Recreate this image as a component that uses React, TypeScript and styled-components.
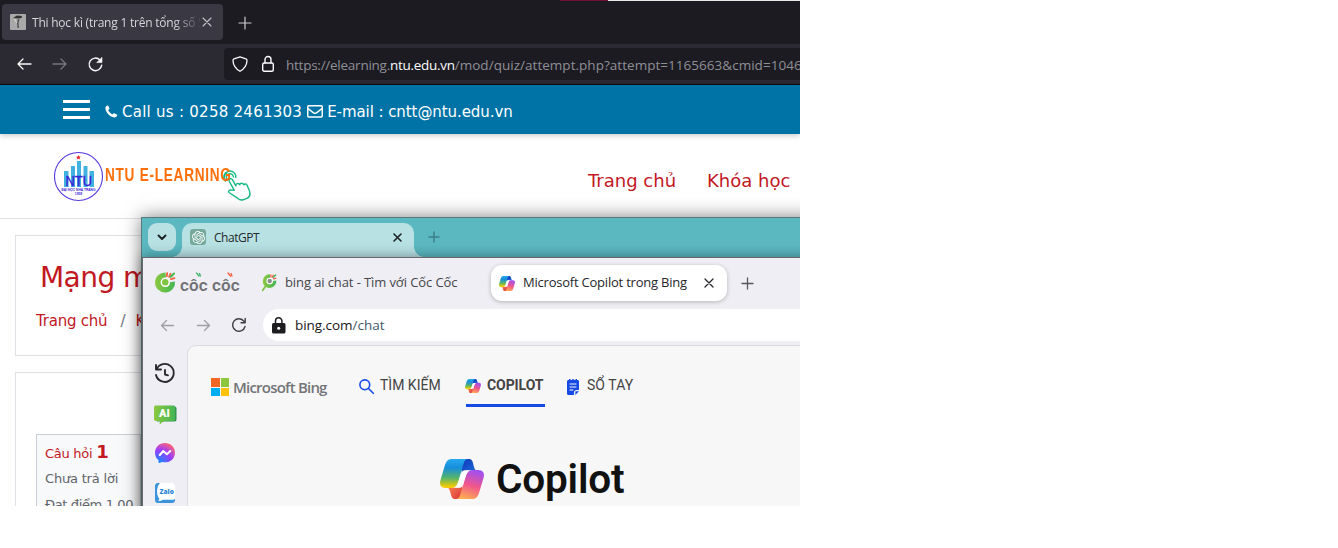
import React from 'react';
import styled, { createGlobalStyle } from 'styled-components';
import { SiOpenai } from 'react-icons/si';

const Global = createGlobalStyle`
  * { box-sizing: border-box; }
  html, body { margin: 0; background: #fff; }
`;

const SEGOE = `'Open Sans', 'Noto Sans', sans-serif`;
const VERDANA = `'DejaVu Sans', sans-serif`;
const ROBOTO = `Roboto, 'Noto Sans', sans-serif`;

const Desktop = styled.main`
  position: relative;
  width: 800px;
  height: 506px;
  overflow: hidden;
  background: #fff;
`;

const Label = styled.span<{ $size: number; $color?: string; $font?: string; $weight?: number; $ls?: number; $lh?: number; $ml?: number; $mt?: number }>`
  margin: ${p => p.$mt ?? 0}px 0 0 ${p => p.$ml ?? 0}px;
  font-family: ${p => p.$font ?? SEGOE};
  font-size: ${p => p.$size}px;
  color: ${p => p.$color ?? '#222'};
  font-weight: ${p => p.$weight ?? 400};
  letter-spacing: ${p => p.$ls ?? 0}px;
  line-height: ${p => p.$lh ?? 20}px;
  white-space: nowrap;
  flex: none;
`;

const Glyph = styled.svg<{ $ml?: number; $mt?: number }>`
  display: block;
  flex: none;
  overflow: visible;
  margin-left: ${p => p.$ml ?? 0}px;
  margin-top: ${p => p.$mt ?? 0}px;
  fill: none;
  stroke-linecap: round;
  stroke-linejoin: round;
`;

/* Outer browser */
const TabStrip = styled.div`
  display: flex;
  height: 44px;
  padding: 4px 0 4px 2px;
  background: #1c1b22;
`;
const TopEdge = styled.div`
  position: absolute;
  top: 0;
  left: 560px;
  width: 240px;
  height: 1px;
  background: linear-gradient(90deg, #6d1035 48px, #e6ebe6 48px);
`;
const DarkTab = styled.div`
  display: flex;
  align-items: center;
  width: 221px;
  height: 36px;
  padding-left: 8px;
  border-radius: 4px;
  background: #3a3843;
`;
const TabTitle = styled.div`
  width: 168px;
  margin-left: 6px;
  padding-top: 2px;
  overflow: hidden;
  mask-image: linear-gradient(90deg, #000 142px, transparent 170px);
`;
const DarkNav = styled.div`
  display: flex;
  align-items: center;
  height: 41px;
  padding: 0 0 1px 16px;
  background: #2b2a33;
  border-bottom: 1px solid #0c0c0d;
`;
const DarkUrl = styled.div`
  display: flex;
  align-items: center;
  width: 590px;
  height: 32px;
  margin-left: 121px;
  padding-left: 8px;
  border-radius: 4px;
  background: #1c1b22;
  flex: none;
`;

/* School site */
const ContactBar = styled.div`
  position: relative;
  display: flex;
  align-items: center;
  height: 49px;
  padding: 4px 0 0 63px;
  background: #0073a6;
  box-shadow: 0 1px 6px rgba(0, 0, 0, 0.25);
`;
const Burger = styled.div`
  display: flex;
  flex-direction: column;
  justify-content: space-between;
  width: 27px;
  height: 19px;
  margin-top: -4px;
`;
const BurgerLine = styled.i`
  height: 3px;
  background: #fff;
`;
const SiteHeader = styled.div`
  display: flex;
  height: 85px;
  padding-left: 54px;
  border-bottom: 1px solid #dee2e6;
`;
const Brand = styled.div`
  display: flex;
  width: 534px;
  padding-top: 17px;
`;
const BrandName = styled.div`
  width: 126px;
  height: 22px;
  margin-top: 13px;
  padding-left: 1px;
`;
const BrandText = styled(Label)`
  display: inline-block;
  transform: scaleX(0.735);
  transform-origin: 0 50%;
`;
const SiteNav = styled.nav`
  display: flex;
  gap: 31px;
  padding-top: 37px;
`;
const Card = styled.section<{ $h: number }>`
  width: 800px;
  height: ${p => p.$h}px;
  margin: 16px 0 0 15px;
  border: 1px solid #dee2e6;
`;
const CourseTitle = styled.div`
  padding: 22px 0 0 24px;
  height: 75px;
`;
const Crumbs = styled.div`
  display: flex;
  padding-left: 20px;
`;
const QuestionBox = styled.div`
  display: flex;
  flex-direction: column;
  width: 105px;
  height: 120px;
  margin: 61px 0 0 20px;
  padding: 7px 0 0 8px;
  overflow: hidden;
  background: #f8f9fa;
  border: 1px solid #cad0d7;
`;
const QuestionLine = styled.div<{ $h: number }>`
  display: flex;
  align-items: baseline;
  height: ${p => p.$h}px;
  flex: none;
`;

/* Floating windows */
const TealWindow = styled.div`
  position: absolute;
  left: 141px;
  top: 217px;
  width: 700px;
  height: 320px;
  background: #5bb8c1;
  border: 1px solid #59797d;
  box-shadow: 0 0 17px rgba(0, 0, 0, 0.5);
`;
const TealStrip = styled.div`
  display: flex;
  height: 39px;
  padding: 5px 0 0 6px;
`;
const TealMenu = styled.div`
  display: grid;
  place-items: center;
  width: 28px;
  height: 28px;
  border-radius: 9px;
  background: #b8e1e4;
`;
const TealTab = styled.div`
  position: relative;
  display: flex;
  align-items: flex-start;
  width: 232px;
  height: 34px;
  margin-left: 6px;
  padding: 6px 0 0 8px;
  border-radius: 10px 10px 0 0;
  background: #b8e1e4;
  &::before, &::after {
    content: '';
    position: absolute;
    bottom: 0;
    width: 10px;
    height: 10px;
    background: radial-gradient(circle at 0 0, transparent 9.5px, #b8e1e4 10px);
    left: -10px;
  }
  &::after {
    left: auto;
    right: -10px;
    background: radial-gradient(circle at 100% 0, transparent 9.5px, #b8e1e4 10px);
  }
`;
const GptBadge = styled.div`
  display: grid;
  place-items: center;
  width: 16px;
  height: 16px;
  border-radius: 3px;
  background: #75a99a;
  color: #fff;
  font-size: 13px;
`;
const BingWindow = styled.div`
  position: absolute;
  left: 142px;
  top: 257px;
  width: 700px;
  height: 280px;
  background: #efeef4;
  border: 1px solid #68686d;
  box-shadow: 0 0 12px rgba(0, 0, 0, 0.42);
`;
const LightTabs = styled.div`
  display: flex;
  height: 51px;
  padding: 7px 0 0 12px;
`;
const CocCocName = styled.div`
  position: relative;
  display: flex;
  margin: 7px 0 0 4px;
  width: 60px;
  height: 26px;
`;
const CocAccents = styled(Glyph)`
  position: absolute;
  left: 0;
  top: 0;
`;
const PlainTab = styled.div`
  display: flex;
  width: 251px;
  padding: 8px 0 0 22px;
`;
const ActiveTab = styled.div`
  display: flex;
  align-items: center;
  width: 236px;
  height: 36px;
  padding-left: 8px;
  border-radius: 11px;
  background: #fff;
  box-shadow: 0 1px 4px rgba(0, 0, 0, 0.25);
`;
const LightNav = styled.div`
  display: flex;
  align-items: center;
  height: 32px;
  padding-left: 17px;
`;
const LightUrl = styled.div`
  display: flex;
  align-items: center;
  width: 600px;
  height: 32px;
  margin-left: 17px;
  padding-left: 9px;
  border-radius: 16px;
  background: #fff;
  flex: none;
`;
const LightBody = styled.div`
  display: flex;
  padding-top: 4px;
`;
const Rail = styled.aside`
  display: flex;
  flex-direction: column;
  width: 44px;
  height: 180px;
  padding: 18px 0 0 11px;
  flex: none;
`;
const BingPage = styled.div`
  width: 680px;
  height: 190px;
  border: 1px solid #dcdce0;
  border-radius: 9px 0 0 0;
  background: #f7f7f7;
  flex: none;
`;
const BingHeader = styled.div`
  display: flex;
  height: 61px;
  padding-left: 23px;
`;
const MsLogo = styled.div`
  display: flex;
  width: 148px;
`;
const MsSquares = styled.div`
  display: grid;
  grid-template: 8.5px 8.5px / 8.5px 8.5px;
  gap: 1px;
  margin: 32px 4px 0 0;
`;
const Square = styled.i<{ $c: string }>`
  background: ${p => p.$c};
`;
const BingItem = styled.div<{ $w: number; $ml?: number; $gap: number; $active?: boolean }>`
  display: flex;
  gap: ${p => p.$gap}px;
  width: ${p => p.$w}px;
  height: 61px;
  margin-left: ${p => p.$ml ?? 0}px;
  padding-top: 29px;
  border-bottom: ${p => (p.$active ? '3px solid #174ae4' : 'none')};
`;
const Hero = styled.div`
  display: flex;
  padding: 52px 0 0 252px;
`;

const CopilotMark = ({ w, h, mt = 0, ml = 0, id }: { w: number; h: number; mt?: number; ml?: number; id: string }) => (
  <Glyph width={w} height={h} viewBox="0 0 44 40" $mt={mt} $ml={ml} preserveAspectRatio="none">
    <defs>
      <linearGradient id={id + 'a'} x1="0" y1="0" x2="0" y2="1">
        <stop offset="0" stopColor="#27a9ee" />
        <stop offset=".3" stopColor="#168edb" />
        <stop offset=".65" stopColor="#56b56a" />
        <stop offset=".95" stopColor="#f3cb05" />
      </linearGradient>
      <linearGradient id={id + 'b'} x1=".6" y1="0" x2=".3" y2="1">
        <stop offset="0" stopColor="#a24ff0" />
        <stop offset=".5" stopColor="#f0568c" />
        <stop offset="1" stopColor="#ffae50" />
      </linearGradient>
      <linearGradient id={id + 'c'} x1="0" y1="0" x2="1" y2="1">
        <stop offset="0" stopColor="#0b35b8" />
        <stop offset="1" stopColor="#2476e0" />
      </linearGradient>
      <linearGradient id={id + 'd'} x1="0" y1="0" x2="1" y2="1">
        <stop offset="0" stopColor="#ff9159" />
        <stop offset="1" stopColor="#d93138" />
      </linearGradient>
    </defs>
    <path fill={`url(#${id}c)`} d="M22 0h7c3 0 3.700 2.500 4.500 6 .8 3.500 1.500 5 3.500 5.500H27c-3 0-4 1.500-5.500 5z" />
    <path fill={`url(#${id}d)`} d="M22 40h-7c-3 0-3.700-2.500-4.500-6-.8-3.500-1.500-5-3.500-5.500h10c3 0 4-1.500 5.500-5z" />
    <path fill={`url(#${id}a)`} d="M12 0h16c-3 0-4 3-5 7l-4.500 15c-2 6-4 7-8 7H6c-5 0-7-3-5.500-8L5 6c1.500-4 3-6 7-6z" />
    <path fill={`url(#${id}b)`} d="M32 40H16c3 0 4-3 5-7l4.500-15c2-6 4-7 8-7H38c5 0 7 3 5.500 8L39 34c-1.500 4-3 6-7 6z" />
    <path fill="#fff" d="M25 11.200h6c-3 .3-4 2-5 5l-3 9.800c-1 2.500-2 2.800-4.500 2.800H13c3-.3 4-1.800 5-4.800l3-9.500c1-2.500 2-3.300 4-3.300z" />
  </Glyph>
);

const CocCocMark = ({ tail = false }: { tail?: boolean }) => (
  <Glyph width={tail ? 15 : 21} height={tail ? 17 : 21} viewBox={tail ? '-1 0 22 25' : '0 0 21 21'} $mt={tail ? 1 : 7}>
    <defs>
      <linearGradient id="coc" x1="0" x2="1">
        <stop offset="0" stopColor="#8bc83f" />
        <stop offset="1" stopColor="#43b654" />
      </linearGradient>
    </defs>
    {tail && <path stroke="#7cc142" strokeWidth="2.500" d="M5 17l-5 7" />}
    <path fill="url(#coc)" d="M10.500.5A10 10 0 1 0 20 9.500l-5 .8a4.500 4.500 0 1 1-4-4.500z" />
    <circle cx="10.300" cy="10.300" r="4" stroke="#fff" strokeWidth="1.500" fill={tail ? '#8b8f8b' : '#7fc644'} />
    <path stroke="#f4603e" strokeWidth="1.800" d="M12.200 1.200l-.4 3M15.500 1.800l-1.500 3M16 7.200l3.400-1" />
    <path stroke="#43b654" strokeWidth="2" d="M19 1.500l-3.200 3.200" />
  </Glyph>
);

const SchoolLogo = () => (
  <Glyph width="50" height="50" viewBox="0 0 50 50">
    <circle cx="24.500" cy="25.500" r="24" fill="#fff" stroke="#5637e0" strokeWidth="1.100" />
    <path fill="#e3262b" d="M24.500 4l.7 1.500 1.600.2-1.200 1.200.3 1.700-1.400-.8-1.500.8.3-1.700-1.200-1.200 1.700-.2z" />
    <path fill="#41b2e0" d="M10 20h4.500v16H10zM17 15h4v21h-4zM23 10h4v26h-4zM29.500 15h4v21h-4zM35.500 20H40v16h-4.500z" />
    <text x="11.500" y="34.500" fontFamily="Liberation Sans" fontSize="14" fill="#3a22d8" stroke="#3a22d8" strokeWidth=".4" textLength="26.500" lengthAdjust="spacingAndGlyphs">NTU</text>
    <text x="7.500" y="40" fontFamily="Liberation Sans" fontSize="3.800" fontWeight="700" fill="#3a22d8" textLength="34" lengthAdjust="spacingAndGlyphs">ĐẠI HỌC NHA TRANG</text>
    <text x="24.500" y="44.300" textAnchor="middle" fontFamily="Liberation Sans" fontSize="3.300" fontWeight="700" fill="#3a22d8">1959</text>
  </Glyph>
);

const PointerHand = () => (
  <Glyph width="28" height="30" viewBox="0 0 28 30" $ml={-7} $mt={20} stroke="#19b983" strokeWidth="1.400">
    <path d="M6.500 8.300c1-1.200 2.300-.8 2.900.3l3.500 6.200c-.5-2 2.500-3.300 3.900-1 0-1.700 2.800-2.500 3.900 0 .8-1.300 3-1 3.500.8l2.300 5.500c1 3-.2 6-2.500 7.300l-4 1.400c-2 .5-4-.3-5.500-1.600l-8.500-5.700c-1-1 0-2.700 1.800-2.500l3.500.3-5-9c-.3-.7-.3-1.400.2-2z" />
    <path d="M2.300 10a6 6 0 1 1 10.500-3.500M4.500 9a3.600 3.600 0 1 1 6-3" />
    <path d="M1 7.500a7 7 0 0 1 3-6" />
  </Glyph>
);

export default function App() {
  return (
    <>
      <Global />
      <Desktop>
        <TabStrip>
          <DarkTab>
            <Glyph width="16" height="16" viewBox="0 0 16 16">
              <rect width="16" height="16" rx="1" fill="#a9a9a9" />
              <path fill="#333" d="M3 4l4-2.500 5 .5-.5 2-3 .5z" />
              <path fill="#555" d="M8 5l1.500.5L8.500 9l.5 5H7.500L7 9z" />
              <path stroke="#e0e0e0" d="M5 5.500l1.500 3" />
            </Glyph>
            <TabTitle><Label $size={12} $ls={-0.22} $color="#d6d5dc">Thi học kì (trang 1 trên tổng số 5)</Label></TabTitle>
            <Glyph width="8" height="8" viewBox="0 0 8 8" $ml={3} stroke="#c4c3ca" strokeWidth="1.100"><path d="M0 0l8 8M8 0L0 8" /></Glyph>
          </DarkTab>
          <Glyph width="12" height="12" viewBox="0 0 12 12" $ml={16} $mt={13} stroke="#cfced4" strokeWidth="1.200"><path d="M6 0v12M0 6h12" /></Glyph>
        </TabStrip>
        <TopEdge />
        <DarkNav>
          <Glyph width="15" height="12" viewBox="0 0 15 12" $ml={1} $mt={1} stroke="#fbfbfe" strokeWidth="1.300"><path d="M14 6H1M6 1L1 6l5 5" /></Glyph>
          <Glyph width="15" height="12" viewBox="0 0 15 12" $ml={20} $mt={1} stroke="#77767d" strokeWidth="1.300"><path d="M1 6h13M9 1l5 5-5 5" /></Glyph>
          <Glyph width="15" height="15" viewBox="0 0 15 15" $ml={21} $mt={2} stroke="#fbfbfe" strokeWidth="1.400">
            <path d="M13.700 8.200A6.300 6.300 0 1 1 12 3" /><path fill="#fbfbfe" strokeWidth=".6" d="M14 .6v5H9z" />
          </Glyph>
          <DarkUrl>
            <Glyph width="16" height="16" viewBox="0 0 16 16" stroke="#fbfbfe" strokeWidth="1.300"><path d="M8 .8l6 2c.9.300 1.100 1 1 2-.2 4-2.500 8-7 10.500C3.500 12.800 1.200 8.800 1 4.800c-.1-1 .1-1.700 1-2z" /></Glyph>
            <Glyph width="12" height="16" viewBox="0 0 12 16" $ml={14} stroke="#fbfbfe" strokeWidth="1.400"><rect x=".7" y="7" width="10.600" height="8.300" rx="1.500" /><path d="M3 7V3.500a3 3 0 0 1 6 0V7" /></Glyph>
            <Label $ml={12} $mt={2} $size={13.5} $ls={-0.25} $color="#8f8f96">https://elearning.</Label>
            <Label $mt={2} $size={13.5} $ls={-0.29} $color="#fbfbfe">ntu.edu.vn</Label>
            <Label $mt={2} $size={13.5} $ls={0.03} $color="#8f8f96">/mod/quiz/attempt.php?attempt=1165663&amp;cmid=1046</Label>
          </DarkUrl>
        </DarkNav>
        <ContactBar>
          <Burger><BurgerLine /><BurgerLine /><BurgerLine /></Burger>
          <Glyph width="13" height="13" viewBox="0 0 13 13" $ml={15} fill="#fff">
            <path fill="#fff" d="M12.300 10.300c-.2 1.300-1.700 2.200-3 2.100C5 12 .6 7.300.4 3.200.3 1.900 1.200.7 2.500.4c.5-.1.700.1.9.6L4.400 3.300c.1.400 0 .6-.3.900l-1 .9c.8 1.900 2.300 3.500 4.300 4.400l1-1.100c.3-.3.5-.3.900-.2l2.500 1.200c.4.2.6.5.5.9z" />
          </Glyph>
          <Label $ml={4} $font={VERDANA} $size={15} $ls={0.26} $color="#fff">Call us : 0258 2461303</Label>
          <Glyph width="16" height="13" viewBox="0 0 16 13" $ml={5} stroke="#fff" strokeWidth="1.500"><rect x=".75" y=".75" width="14.500" height="11.300" rx="1" /><path d="M1 3.500l5.500 4.300c1 .7 2 .7 3 0L15 3.500" /></Glyph>
          <Label $ml={4} $font={VERDANA} $size={15} $ls={-0.07} $color="#fff">E-mail : cntt@ntu.edu.vn</Label>
        </ContactBar>
        <SiteHeader>
          <Brand>
            <SchoolLogo />
            <BrandName><BrandText $font="'Liberation Sans', sans-serif" $size={18.5} $weight={700} $ls={1} $color="#ff6f0a" $lh={22}>NTU E-LEARNING</BrandText></BrandName>
            <PointerHand />
          </Brand>
          <SiteNav>
            <Label $font={VERDANA} $size={18} $color="#c2181f">Trang chủ</Label>
            <Label $font={VERDANA} $size={18} $color="#c2181f">Khóa học</Label>
          </SiteNav>
        </SiteHeader>
        <Card $h={121}>
          <CourseTitle><Label $font={VERDANA} $size={28} $ls={-0.55} $color="#c2181f" $lh={40}>Mạng máy tính</Label></CourseTitle>
          <Crumbs>
            <Label $font={VERDANA} $size={15} $ls={-0.22} $color="#c2181f">Trang chủ</Label>
            <Label $ml={13} $font={VERDANA} $size={15} $color="#6c757d">/</Label>
            <Label $ml={10} $font={VERDANA} $size={15} $color="#c2181f">Khóa học</Label>
          </Crumbs>
        </Card>
        <Card $h={200}>
          <QuestionBox>
            <QuestionLine $h={27}>
              <Label $font={VERDANA} $size={13} $ls={-0.28} $color="#c2181f">Câu hỏi</Label>
              <Label $ml={4} $font={VERDANA} $size={18} $weight={700} $color="#c2181f">1</Label>
            </QuestionLine>
            <QuestionLine $h={26}><Label $font={VERDANA} $size={13} $ls={-0.19} $color="#5f6469">Chưa trả lời</Label></QuestionLine>
            <QuestionLine $h={24}><Label $font={VERDANA} $size={13} $ls={-0.36} $color="#5f6469">Đạt điểm 1,00</Label></QuestionLine>
          </QuestionBox>
        </Card>

        <TealWindow>
          <TealStrip>
            <TealMenu><Glyph width="8" height="5" viewBox="0 0 8 5" stroke="#1c2223" strokeWidth="1.900"><path d="M.5.5L4 4 7.500.5" /></Glyph></TealMenu>
            <TealTab>
              <GptBadge><SiOpenai /></GptBadge>
              <Label $ml={8} $mt={-1} $size={12} $ls={-0.45} $color="#23292b">ChatGPT</Label>
              <Glyph width="7" height="7" viewBox="0 0 7 7" $ml={135} $mt={5} stroke="#1c2223" strokeWidth="1.600"><path d="M0 0l7 7M7 0L0 7" /></Glyph>
            </TealTab>
            <Glyph width="10" height="10" viewBox="0 0 10 10" $ml={15} $mt={9} stroke="#3d7f88" strokeWidth="1.500"><path d="M5 0v10M0 5h10" /></Glyph>
          </TealStrip>
        </TealWindow>

        <BingWindow>
          <LightTabs>
            <CocCocMark />
            <CocCocName>
              <Label $font="Roboto, sans-serif" $size={17} $weight={600} $ls={0.1} $color="#717276" $lh={26}>côc côc</Label>
              <CocAccents width="60" height="10" viewBox="0 0 60 10" strokeWidth="1.300">
                <path stroke="#3fb66b" d="M16.500 1l2.500 3M19.500 1.500l1 2.500" />
                <path stroke="#f4603e" d="M48 1l2.500 3M51 1.500l1 2.500" />
              </CocAccents>
            </CocCocName>
            <PlainTab>
              <CocCocMark tail />
              <Label $ml={8} $size={13} $ls={-0.1} $mt={-1} $color="#46464b">bing ai chat - Tìm với Cốc Cốc</Label>
            </PlainTab>
            <ActiveTab>
              <CopilotMark id="tab" w={16} h={15} />
              <Label $ml={8} $size={13} $ls={-0.22} $mt={-2} $color="#26262a">Microsoft Copilot trong Bing</Label>
              <Glyph width="8" height="8" viewBox="0 0 8 8" $ml={18} stroke="#26262a" strokeWidth="1.300"><path d="M0 0l8 8M8 0L0 8" /></Glyph>
            </ActiveTab>
            <Glyph width="11" height="11" viewBox="0 0 11 11" $ml={15} $mt={13} stroke="#56565b" strokeWidth="1.300"><path d="M5.500 0v11M0 5.500h11" /></Glyph>
          </LightTabs>
          <LightNav>
            <Glyph width="13" height="11" viewBox="0 0 13 11" $ml={1} stroke="#9e9ea3" strokeWidth="1.300"><path d="M12.500 5.500H.5M5.500.5l-5 5 5 5" /></Glyph>
            <Glyph width="13" height="11" viewBox="0 0 13 11" $ml={23} stroke="#9e9ea3" strokeWidth="1.300"><path d="M.5 5.500h12M7.500.5l5 5-5 5" /></Glyph>
            <Glyph width="14" height="14" viewBox="0 0 14 14" $ml={22} stroke="#3e3e43" strokeWidth="1.400"><path d="M13 8.500A6.300 6.300 0 1 1 12 3.300M13.200.5v4.200H9" /></Glyph>
            <LightUrl>
              <Glyph width="14" height="17" viewBox="0 0 14 17"><rect y="6" width="13.500" height="10.500" rx="1.500" fill="#1d1d20" /><path stroke="#1d1d20" strokeWidth="1.500" d="M3.500 6V4a3.200 3.200 0 0 1 6.400 0v2" /><circle cx="6.700" cy="11.300" r="1.500" fill="#fff" /></Glyph>
              <Label $ml={9} $size={13.5} $ls={-0.05} $color="#17171a">bing.com</Label>
              <Label $size={13.5} $color="#45586b">/chat</Label>
            </LightUrl>
          </LightNav>
          <LightBody>
            <Rail>
              <Glyph width="22" height="20" viewBox="0 0 22 20" $mt={1} stroke="#29292c" strokeWidth="1.900"><path d="M2 1v4.500h5M2.500 5.300A9 9 0 1 1 2 11M11 6v4.500l3 .8" /></Glyph>
              <Glyph width="23" height="20" viewBox="0 0 23 20" $mt={21}>
                <path fill="#2f8f4e" d="M3 1.500h17.500c1.200 0 2 .8 2 2v11c0 1.200-.8 2-2 2H3z" />
                <path fill="url(#coc)" d="M2 .5h17.500c1 0 1.700.7 1.700 1.700v12c0 1-.7 1.800-1.700 1.800H10l-4.500 3.500.5-3.500H2c-1 0-2-.7-2-1.800v-12C0 1.200 1 .5 2 .5z" />
                <text x="10.500" y="12.300" textAnchor="middle" fontFamily="Roboto" fontSize="11" fontWeight="900" fill="#fff">AI</text>
              </Glyph>
              <Glyph width="20" height="20" viewBox="0 0 20 20" $ml={1} $mt={18}>
                <defs><radialGradient id="msg" cx=".2" cy="1" r="1.100"><stop offset="0" stopColor="#0a8dff" /><stop offset=".6" stopColor="#9c3cff" /><stop offset="1" stopColor="#ff6670" /></radialGradient></defs>
                <path fill="url(#msg)" d="M10 0c5.700 0 10 4.100 10 9.700s-4.300 9.600-10 9.600c-1 0-2-.1-2.900-.4L4.500 20c-.5.200-1-.2-1-.7v-2C1.300 15.500 0 12.900 0 9.700 0 4.100 4.300 0 10 0z" />
                <path stroke="#fff" strokeWidth="2" d="M4.800 12l3.500-4 3.600 3.200L15.300 8" />
              </Glyph>
              <Glyph width="20" height="20" viewBox="0 0 20 20" $ml={1} $mt={20}>
                <rect width="20" height="20" rx="3" fill="#3b93dc" />
                <path fill="#fff" d="M5 0h13c1.200 0 2 .8 2 2v13c0 1-1 1.800-2 1.800H8c-1.500 1-3.500 1.500-5 1.200 1-.6 1.400-1.300 1.300-2.300C1 11.500 1.500 3.500 5 0z" />
                <text x="11.700" y="10.800" textAnchor="middle" fontFamily="Open Sans" fontSize="6.500" fontWeight="800" fill="#2c83d3">Zalo</text>
              </Glyph>
            </Rail>
            <BingPage>
              <BingHeader>
                <MsLogo>
                  <MsSquares><Square $c="#f26522" /><Square $c="#8dc63f" /><Square $c="#00aeef" /><Square $c="#ffc20e" /></MsSquares>
                  <Label $mt={31} $size={15} $weight={600} $ls={-0.79} $color="#737578">Microsoft Bing</Label>
                </MsLogo>
                <BingItem $w={82} $gap={6}>
                  <Glyph width="15" height="15" viewBox="0 0 15 15" $mt={4} stroke="#174ae4" strokeWidth="1.600"><circle cx="5.800" cy="5.800" r="4.900" /><path d="M9.500 9.500l4.800 4.800" /></Glyph>
                  <Label $font={ROBOTO} $size={14} $color="#444">TÌM KIẾM</Label>
                </BingItem>
                <BingItem $w={79} $ml={25} $gap={6} $active>
                  <CopilotMark id="nav" w={16} h={14} mt={4} ml={-1} />
                  <Label $font={ROBOTO} $size={14} $weight={700} $ls={-0.08} $color="#444">COPILOT</Label>
                </BingItem>
                <BingItem $w={80} $ml={22} $gap={8}>
                  <Glyph width="12" height="16" viewBox="0 0 12 16" $mt={4}><path fill="#174ae4" d="M1.500 1H2V0h1.500v1h1.800V0h1.500v1h1.700V0H10v1h.5c.8 0 1.500.7 1.500 1.500V11H9.500C8.300 11 7 12 7 13.500V16H1.500C.7 16 0 15.300 0 14.500v-12C0 1.700.7 1 1.500 1zM8.300 16v-2.500c0-.8.500-1.200 1.200-1.200H12z" /><path stroke="#f7f7f7" d="M3 5h6M3 8h6M3 11h3" /></Glyph>
                  <Label $font={ROBOTO} $size={14} $ls={0.05} $color="#444">SỔ TAY</Label>
                </BingItem>
              </BingHeader>
              <Hero>
                <CopilotMark id="hero" w={44} h={40} />
                <Label $ml={12} $mt={-1} $font={ROBOTO} $size={40.5} $weight={600} $ls={-0.2} $color="#111" $lh={42}>Copilot</Label>
              </Hero>
            </BingPage>
          </LightBody>
        </BingWindow>
      </Desktop>
    </>
  );
}
